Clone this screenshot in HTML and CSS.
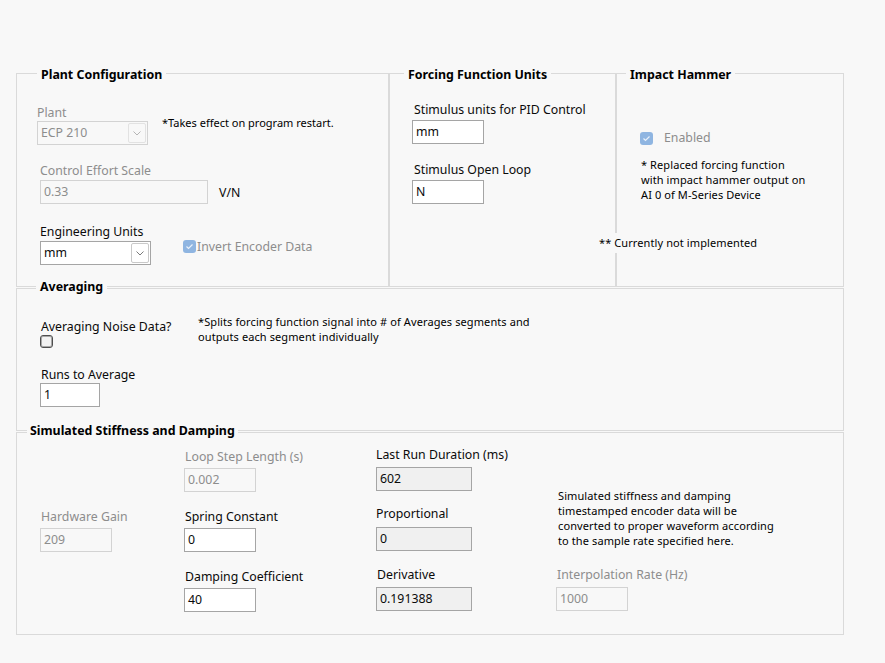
FILE: index.html
```html
<!DOCTYPE html>
<html>
<head>
<meta charset="utf-8">
<link rel="stylesheet" href="styles.css">
</head>
<body>
<div class="panel">
  <div class="toprow">
    <section class="group">
      <span class="gtitle t-plant">Plant Configuration</span>
      <div class="row p-r1">
        <div class="field g2">
          <span class="lbl dis">Plant</span>
          <div class="ctl select dis w111">
            <span class="val">ECP 210</span>
            <span class="btn"><svg width="8" height="5" viewBox="0 0 8 5"><polyline points="0.5,0.5 4,4 7.5,0.5"/></svg></span>
          </div>
        </div>
        <p class="note n-restart">*Takes effect on program restart.</p>
      </div>
      <div class="row p-r2">
        <div class="field g3">
          <span class="lbl dis">Control Effort Scale</span>
          <div class="ctl dis w168">0.33</div>
        </div>
        <span class="unit">V/N</span>
      </div>
      <div class="row p-r3">
        <div class="field g3">
          <span class="lbl">Engineering Units</span>
          <div class="ctl select w111">
            <span class="val">mm</span>
            <span class="btn"><svg width="8" height="5" viewBox="0 0 8 5"><polyline points="0.5,0.5 4,4 7.5,0.5"/></svg></span>
          </div>
        </div>
        <div class="check c-invert">
          <span class="cb on"><svg width="13" height="13" viewBox="0 0 13 13"><polyline points="3.5,6.5 5.5,8.5 9.5,4.5"/></svg></span>
          <span class="cbl dis">Invert Encoder Data</span>
        </div>
      </div>
    </section>

    <section class="group">
      <span class="gtitle t-force">Forcing Function Units</span>
      <div class="field g4 f-stim1">
        <span class="lbl pl2">Stimulus units for PID Control</span>
        <div class="ctl w72">mm</div>
      </div>
      <div class="field g4 f-stim2">
        <span class="lbl pl2">Stimulus Open Loop</span>
        <div class="ctl w72">N</div>
      </div>
    </section>

    <section class="group">
      <span class="gtitle t-impact">Impact Hammer</span>
      <div class="check c-enabled">
        <span class="cb on"><svg width="13" height="13" viewBox="0 0 13 13"><polyline points="3.5,6.5 5.5,8.5 9.5,4.5"/></svg></span>
        <span class="cbl dis">Enabled</span>
      </div>
      <p class="note n-impact">* Replaced forcing function<br>with impact hammer output on<br>AI 0 of M-Series Device</p>
    </section>

    <p class="note floating">** Currently not implemented</p>
  </div>

  <section class="group avg">
    <span class="gtitle t-avg">Averaging</span>
    <div class="row a-r1">
      <div class="a-left">
        <span class="lbl pl1">Averaging Noise Data?</span>
        <span class="cb off"></span>
      </div>
      <p class="note n-avg">*Splits forcing function signal into # of Averages segments and<br>outputs each segment individually</p>
    </div>
    <div class="field g2 a-runs">
      <span class="lbl pl1">Runs to Average</span>
      <div class="ctl w60">1</div>
    </div>
  </section>

  <section class="group sim">
    <span class="gtitle t-sim">Simulated Stiffness and Damping</span>
    <div class="row s-row">
      <div class="col s-c1">
        <div class="field g5 m74">
          <span class="lbl dis pl1">Hardware Gain</span>
          <div class="ctl dis w72">209</div>
        </div>
      </div>
      <div class="col s-c2">
        <div class="field g5 m14">
          <span class="lbl dis pl1">Loop Step Length (s)</span>
          <div class="ctl dis w72">0.002</div>
        </div>
        <div class="field g5 m15">
          <span class="lbl pl1">Spring Constant</span>
          <div class="ctl w72">0</div>
        </div>
        <div class="field g5 m15">
          <span class="lbl pl1">Damping Coefficient</span>
          <div class="ctl w72">40</div>
        </div>
      </div>
      <div class="col s-c3">
        <div class="field g6 m12">
          <span class="lbl">Last Run Duration (ms)</span>
          <div class="ctl ind w96">602</div>
        </div>
        <div class="field g7 m13">
          <span class="lbl">Proportional</span>
          <div class="ctl ind w96">0</div>
        </div>
        <div class="field g6 m14">
          <span class="lbl pl1">Derivative</span>
          <div class="ctl ind w96">0.191388</div>
        </div>
      </div>
      <div class="col s-c4">
        <p class="note n-sim">Simulated stiffness and damping<br>timestamped encoder data will be<br>converted to proper waveform according<br>to the sample rate specified here.</p>
        <div class="field g6 m17">
          <span class="lbl dis pl1">Interpolation Rate (Hz)</span>
          <div class="ctl dis w72">1000</div>
        </div>
      </div>
    </div>
  </section>
</div>
</body>
</html>
```

FILE: styles.css
```css
* { box-sizing: border-box; }

body {
  margin: 0;
  background: #f8f8f8;
  font-family: "Noto Sans", "Open Sans", sans-serif;
  font-size: 12.3px;
  color: #0a0a0a;
}

p { margin: 0; }

.panel {
  width: 885px;
  height: 663px;
  padding: 73px 0 0 16px;
}

.toprow {
  position: relative;
  display: grid;
  grid-template-columns: 373px 227px 228px;
  width: 828px;
  height: 214px;
}

.group {
  position: relative;
  border: 1px solid #dadada;
}

.avg {
  width: 828px;
  height: 143px;
  margin-top: 1px;
}

.sim {
  width: 828px;
  height: 203px;
  margin-top: 1px;
}

.gtitle {
  position: absolute;
  font-weight: 700;
  font-size: 12.4px;
  line-height: 16px;
  padding: 0 4px;
  background: #f8f8f8;
  color: #000;
  white-space: nowrap;
}
.t-plant { top: -7px; left: 20px; }
.t-force { top: -7px; left: 14px; }
.t-impact { top: -7px; left: 9px; }
.t-avg { top: -10px; left: 19px; }
.t-sim { top: -10px; left: 10px; padding: 0 3px; }

.row {
  display: flex;
  align-items: flex-start;
}

.field {
  display: flex;
  flex-direction: column;
  align-items: flex-start;
}

.lbl {
  display: block;
  height: 16px;
  line-height: 19px;
  white-space: nowrap;
}
.pl1 { padding-left: 1px; }
.pl2 { padding-left: 2px; }

.dis { color: #8d8d8d; }

.g2 .ctl { margin-top: 2px; }
.g3 .ctl { margin-top: 3px; }
.g4 .ctl { margin-top: 4px; }
.g5 .ctl { margin-top: 5px; }
.g6 .ctl { margin-top: 6px; }
.g7 .ctl { margin-top: 7px; }

.m12 { margin-top: 12px; }
.m13 { margin-top: 13px; }
.m14 { margin-top: 14px; }
.m15 { margin-top: 15px; }
.m17 { margin-top: 17px; }
.m74 { margin-top: 74px; }

.ctl {
  height: 24px;
  border: 1px solid #a5a5a5;
  background: #fff;
  padding: 0 3px;
  line-height: 22px;
  white-space: nowrap;
  color: #0a0a0a;
}
.ctl.dis {
  border-color: #d3d3d3;
  background: #f8f8f8;
  color: #8d8d8d;
}
.ctl.ind {
  background: #f0f0f0;
}

.w60 { width: 60px; }
.w72 { width: 72px; }
.w96 { width: 96px; }
.w111 { width: 111px; }
.w168 { width: 168px; }

.select {
  display: flex;
  justify-content: space-between;
  align-items: center;
  padding: 1px 1px 1px 3px;
}
.select .val { line-height: 20px; }
.btn {
  width: 18px;
  height: 20px;
  border: 1px solid #c9c9c9;
  border-radius: 2px;
  background: #fff;
  display: flex;
  align-items: center;
  justify-content: center;
}
.btn svg polyline {
  fill: none;
  stroke: #7a7a7a;
  stroke-width: 1;
}
.select.dis .btn {
  border-color: #e2e2e2;
  background: #f8f8f8;
}
.select.dis .btn svg polyline { stroke: #b5b5b5; }

.note {
  font-size: 11px;
  letter-spacing: 0.1px;
  line-height: 15px;
  white-space: nowrap;
  color: #000;
}

/* Plant configuration */
.p-r1 { margin: 29px 0 0 20px; }
.n-restart { margin: 12px 0 0 14px; line-height: 16px; letter-spacing: 0; }
.p-r2 { margin: 16px 0 0 23px; }
.unit { margin: 24px 0 0 11px; line-height: 16px; }
.p-r3 { margin: 18px 0 0 23px; }

.check {
  display: flex;
  align-items: flex-start;
}
.cb {
  display: block;
  width: 13px;
  height: 13px;
  border-radius: 3px;
  flex: none;
}
.cb.on { background: #8fb5e1; }
.cb.on svg { display: block; }
.cb.on svg polyline {
  fill: none;
  stroke: #e8f0fa;
  stroke-width: 1.2;
}
.cb.off {
  background: #f2f2f2;
  border: 1px solid #4e4e4e;
  box-shadow: inset 0 0 0 1px #a8a8a8;
}
.cbl { line-height: 16px; white-space: nowrap; }

.c-invert { margin: 17px 0 0 32px; }
.c-invert .cb { margin-top: 1px; }
.c-invert .cbl { margin-left: 1px; }

/* Forcing function */
.f-stim1 { margin: 26px 0 0 22px; }
.f-stim2 { margin: 16px 0 0 22px; }

/* Impact hammer */
.c-enabled { margin: 56px 0 0 23px; }
.c-enabled .cb { margin-top: 2px; }
.c-enabled .cbl { margin-left: 11px; }
.n-impact { margin: 11px 0 0 24px; }

.floating {
  position: absolute;
  left: 583px;
  top: 160px;
  padding: 2px 0;
  line-height: 16px;
  background: #f8f8f8;
}

/* Averaging */
.a-r1 { margin-left: 23px; }
.a-left {
  width: 158px;
  margin-top: 28px;
  display: flex;
  flex-direction: column;
  align-items: flex-start;
}
.a-left .cb { margin-top: 2px; }
.n-avg { margin-top: 25px; }
.a-runs { margin: 17px 0 0 23px; }

/* Simulated stiffness */
.s-c1 { margin-left: 23px; width: 72px; }
.s-c2 { margin-left: 72px; width: 72px; }
.s-c3 { margin-left: 120px; width: 96px; }
.s-c4 { margin-left: 84px; }
.n-sim { margin-top: 55px; padding-left: 2px; }
```
